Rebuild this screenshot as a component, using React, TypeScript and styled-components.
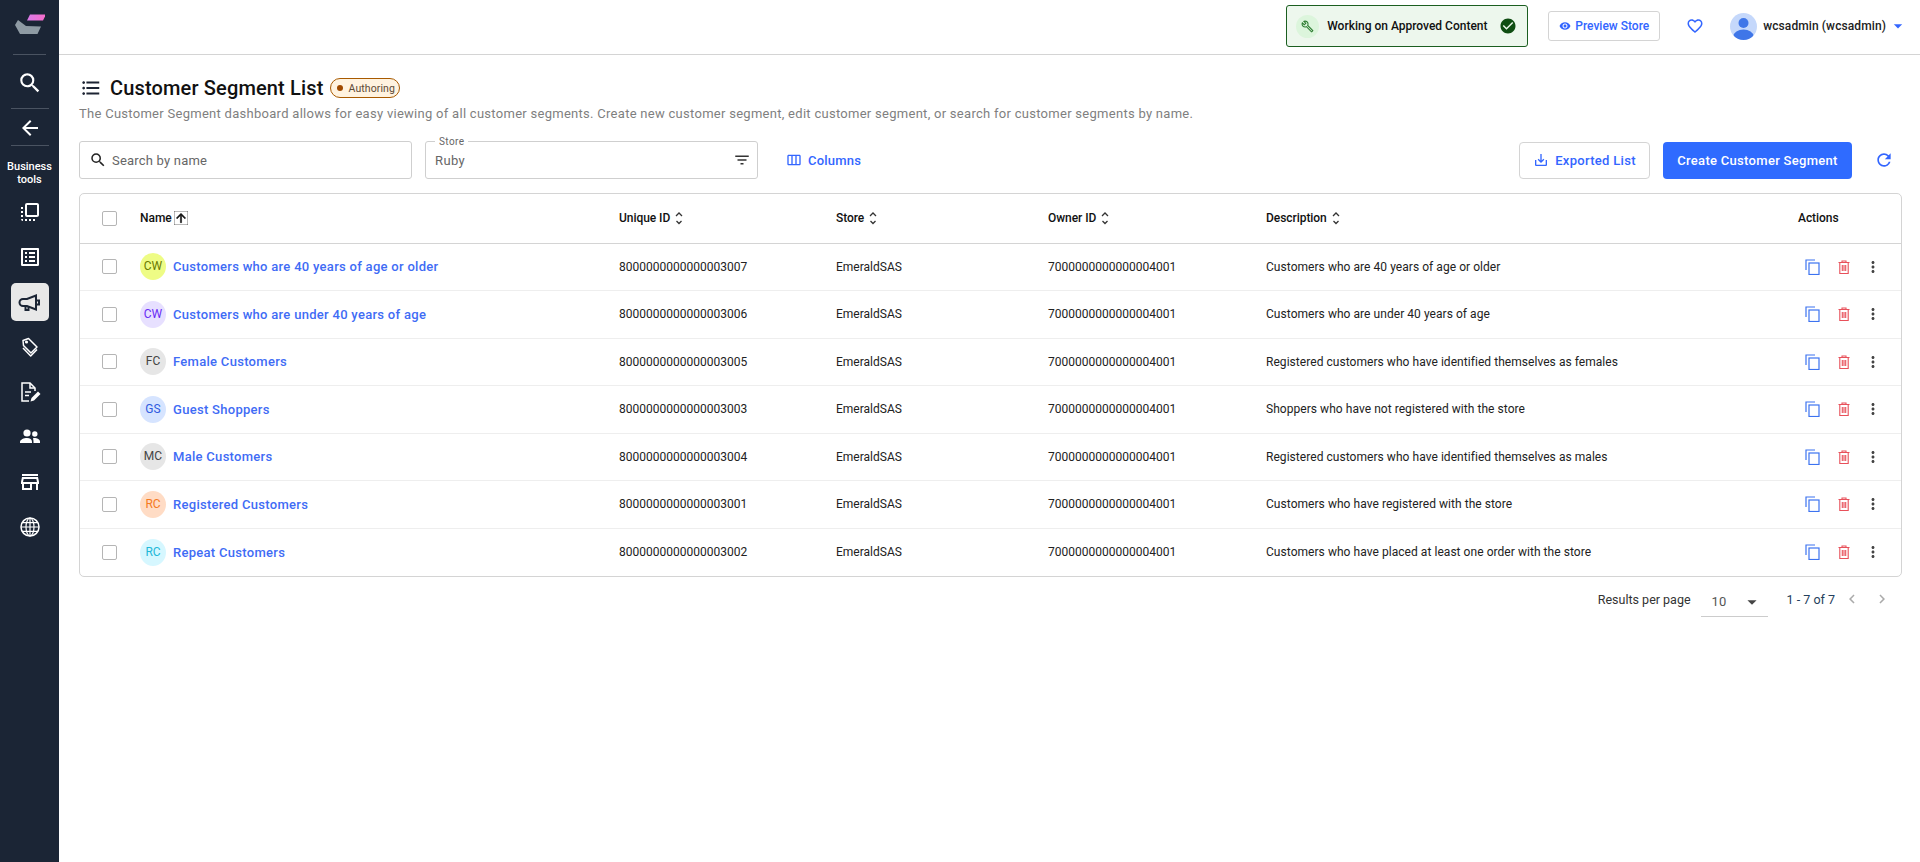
import styled, { createGlobalStyle } from "styled-components";
import {
  MdArrowBack, MdArrowDropDown, MdArrowUpward, MdCheckCircle, MdChevronLeft, MdChevronRight,
  MdFavoriteBorder, MdFilterList, MdFlipToFront, MdFormatListBulleted, MdMoreVert,
  MdOutlineBuild, MdOutlineListAlt, MdOutlineStore,
  MdOutlineViewWeek, MdRefresh, MdRemoveRedEye, MdSaveAlt, MdSearch,
} from "react-icons/md";

const GlobalStyle = createGlobalStyle`
  html, body { margin: 0; padding: 0; background: #fff; }
  body { font-family: Roboto, "Liberation Sans", sans-serif; color: #111; }
  * { box-sizing: border-box; }
`;

const Shell = styled.div`
  display: flex;
  min-height: 862px;
`;

const Sidebar = styled.aside`
  width: 59px;
  flex: none;
  background: #1b2535;
  display: flex;
  flex-direction: column;
  align-items: center;
  color: #fff;
`;

const LogoBox = styled.div`
  height: 55px;
  width: 33px;
  display: flex;
  align-items: flex-start;
  justify-content: center;
  border-bottom: 1px solid #4a5361;
  padding-top: 13px;
`;

const SideSlot = styled.div`
  height: 54px;
  width: 38px;
  display: flex;
  align-items: center;
  justify-content: center;
  font-size: 26px;
  padding-top: 2px;
  border-bottom: 1px solid #4a5361;
`;

const BackSlot = styled(SideSlot)`
  height: 37px;
  font-size: 24px;
`;

const SideLabel = styled.div`
  font-size: 11px;
  font-weight: 500;
  line-height: 13px;
  text-align: center;
  margin: 14px 0 7px;
  width: 50px;
`;

const SideNav = styled.nav`
  display: flex;
  flex-direction: column;
  gap: 7px;
`;

const SideItem = styled.div<{ $active?: boolean }>`
  width: 38px;
  height: 38px;
  border-radius: 5px;
  display: flex;
  align-items: center;
  justify-content: center;
  font-size: 24px;
  background: ${(p) => (p.$active ? "#e8e8e8" : "transparent")};
  color: ${(p) => (p.$active ? "#1b2535" : "#fff")};
`;

const Main = styled.main`
  flex: 1;
  min-width: 0;
  display: flex;
  flex-direction: column;
`;

const TopBar = styled.header`
  height: 55px;
  border-bottom: 1px solid #d4d4d4;
  display: flex;
  align-items: center;
  justify-content: flex-end;
  padding: 0 12px 2px 0;
`;

const WorkingBox = styled.div`
  width: 242px;
  height: 42px;
  border: 1px solid #1b5e20;
  border-radius: 3px;
  background: #edf7ed;
  display: flex;
  align-items: center;
  padding: 0 10px 0 9px;
  font-size: 12px;
  font-weight: 500;
  color: #111;
`;

const WrenchCircle = styled.span`
  width: 23px;
  height: 23px;
  border-radius: 50%;
  background: #dcf5dc;
  color: #2e7d32;
  display: flex;
  align-items: center;
  justify-content: center;
  font-size: 13px;
  margin-right: 8px;
`;

const WorkingText = styled.span`
  flex: 1;
`;

const CheckIcon = styled(MdCheckCircle)`
  color: #0f4d12;
  font-size: 18px;
`;

const PreviewButton = styled.div`
  width: 112px;
  height: 30px;
  margin-left: 20px;
  border: 1px solid #d4d4d4;
  border-radius: 3px;
  color: #3366ff;
  font-size: 12px;
  font-weight: 500;
  display: flex;
  align-items: center;
  justify-content: center;
  gap: 4px;
`;

const HeartIcon = styled(MdFavoriteBorder)`
  color: #3366ff;
  font-size: 18px;
  margin: 0 26px 0 26px;
`;

const Avatar = styled.span`
  width: 27px;
  height: 27px;
  border-radius: 50%;
  overflow: hidden;
  background: #c5d8fb;
  display: block;
  margin-right: 6px;
`;

const UserName = styled.span`
  font-size: 12px;
  font-weight: 500;
  letter-spacing: 0.1px;
  color: #222;
`;

const UserCaret = styled(MdArrowDropDown)`
  color: #3366ff;
  font-size: 20px;
  margin-left: 2px;
`;

const Content = styled.div`
  padding: 20px 18px 0 20px;
`;

const TitleRow = styled.div`
  display: flex;
  align-items: center;
  height: 26px;
  padding-left: 1px;
`;

const TitleIcon = styled(MdFormatListBulleted)`
  font-size: 22px;
  color: #1d2433;
  margin-right: 8px;
`;

const Title = styled.h1`
  font-size: 20px;
  font-weight: 500;
  margin: 0 6px 0 0;
  letter-spacing: 0.15px;
  color: #111;
`;

const Badge = styled.span`
  height: 20px;
  width: 70px;
  border: 1px solid #a85a00;
  border-radius: 10px;
  background: #fff3e0;
  display: flex;
  align-items: center;
  font-size: 10.5px;
  color: #5d4a36;
  letter-spacing: 0.1px;
  padding-left: 6px;
  gap: 6px;
`;

const BadgeDot = styled.i`
  width: 6px;
  height: 6px;
  border-radius: 50%;
  background: #a04a00;
`;

const Description = styled.p`
  margin: 4px 0 0;
  font-size: 13px;
  line-height: 18px;
  color: #7f7f7f;
  letter-spacing: 0.28px;
`;

const Toolbar = styled.div`
  display: flex;
  align-items: center;
  margin-top: 18px;
  height: 38px;
`;

const Field = styled.div`
  position: relative;
  width: 333px;
  height: 38px;
  border: 1px solid #cfcfcf;
  border-radius: 3px;
  display: flex;
  align-items: center;
  font-size: 13px;
  letter-spacing: 0.4px;
  color: #666;
`;

const SearchField = styled(Field)`
  padding-left: 9px;
  gap: 5px;
  letter-spacing: 0.2px;
`;

const StoreField = styled(Field)`
  margin-left: 13px;
  padding: 0 6px 0 9px;
  justify-content: space-between;
`;

const FieldLabel = styled.span`
  position: absolute;
  top: -6px;
  left: 9px;
  padding: 0 4px;
  background: #fff;
  font-size: 10px;
  line-height: 12px;
  color: #666;
`;

const ColumnsButton = styled.div`
  margin-left: 28px;
  display: flex;
  align-items: center;
  gap: 6px;
  color: #3366ff;
  font-size: 13px;
  font-weight: 500;
  letter-spacing: 0.2px;
`;

const ToolbarRight = styled.div`
  margin-left: auto;
  display: flex;
  align-items: center;
`;

const ExportButton = styled.div`
  width: 131px;
  height: 37px;
  border: 1px solid #d4d4d4;
  border-radius: 4px;
  display: flex;
  align-items: center;
  justify-content: center;
  gap: 6px;
  color: #3366ff;
  font-size: 13px;
  font-weight: 500;
  letter-spacing: 0.3px;
`;

const CreateButton = styled.div`
  width: 189px;
  height: 37px;
  margin-left: 13px;
  border-radius: 4px;
  background: #2f6bff;
  color: #fff;
  display: flex;
  align-items: center;
  justify-content: center;
  font-size: 13px;
  font-weight: 500;
  letter-spacing: 0.3px;
`;

const RefreshIcon = styled(MdRefresh)`
  color: #3366ff;
  font-size: 20px;
  margin: 0 8px 0 22px;
`;

const Table = styled.div`
  margin-top: 14px;
  border: 1px solid #d4d4d4;
  border-radius: 5px;
`;

const COLUMNS = "60px 479px 217px 212px 218px 532px 1fr";

const HeadRow = styled.div`
  display: grid;
  grid-template-columns: ${COLUMNS};
  align-items: center;
  height: 49.5px;
  border-bottom: 1px solid #d4d4d4;
  font-size: 12px;
  font-weight: 500;
  color: #111;
`;

const Row = styled.div`
  display: grid;
  grid-template-columns: ${COLUMNS};
  align-items: center;
  height: 47.5px;
  border-bottom: 1px solid #eee;
  font-size: 12px;
  color: #222;
  &:last-child { border-bottom: none; }
`;

const CheckCell = styled.div`
  padding-left: 22px;
  display: flex;
`;

const Checkbox = styled.span`
  width: 15px;
  height: 15px;
  border: 1px solid #b5b5b5;
  border-radius: 2px;
  display: block;
`;

const HeadCell = styled.div`
  display: flex;
  align-items: center;
  gap: 2px;
  font-size: 12px;
  letter-spacing: -0.05px;
`;

const SortGlyph = styled.svg`
  width: 8px;
  height: 16px;
  margin-left: 3px;
  color: #333;
`;

const NameCell = styled.div`
  display: flex;
  align-items: center;
  gap: 7px;
`;

const Initials = styled.span<{ $bg: string; $fg: string }>`
  width: 26px;
  height: 27px;
  border-radius: 50%;
  background: ${(p) => p.$bg};
  color: ${(p) => p.$fg};
  font-size: 12px;
  font-weight: 400;
  padding-bottom: 1px;
  display: flex;
  align-items: center;
  justify-content: center;
`;

const NameLink = styled.a`
  color: #3f6cf5;
  font-size: 13px;
  font-weight: 500;
  letter-spacing: 0.29px;
`;

const DescriptionCell = styled.div`
  letter-spacing: 0.05px;
`;

const Actions = styled.div`
  display: flex;
  align-items: center;
  padding-left: 7px;
`;

const CopyGlyph = styled.svg`
  width: 16px;
  height: 16px;
  color: #3d73f0;
`;

const TrashGlyph = styled.svg`
  width: 16px;
  height: 16px;
  margin-left: 15px;
  color: #e8505a;
`;

const MoreIcon = styled(MdMoreVert)`
  font-size: 18px;
  color: #444;
  margin-left: 12px;
`;

const Pager = styled.div`
  display: flex;
  align-items: center;
  justify-content: flex-end;
  height: 44px;
  font-size: 12.5px;
  color: #333;
  padding-right: 7px;
`;

const PageSelect = styled.div`
  width: 67px;
  height: 30px;
  margin: 6px 19px 0 10px;
  padding: 0 5px 0 11px;
  border-bottom: 1px solid #ccc;
  display: flex;
  align-items: center;
  justify-content: space-between;
  font-size: 13px;
  color: #555;
`;

const PageCount = styled.span`
  font-size: 12.5px;
  color: #24405c;
`;

const PageArrow = styled.span`
  display: flex;
  color: #aaa;
  font-size: 18px;
  margin-left: 3px;
  width: 27px;
  justify-content: center;
`;

const SEGMENTS = [
  { initials: "CW", bg: "#eefc85", fg: "#6b7a00", name: "Customers who are 40 years of age or older", id: "8000000000000003007", desc: "Customers who are 40 years of age or older" },
  { initials: "CW", bg: "#e7e0ff", fg: "#6a2cf5", name: "Customers who are under 40 years of age", id: "8000000000000003006", desc: "Customers who are under 40 years of age" },
  { initials: "FC", bg: "#e6e6e6", fg: "#444", name: "Female Customers", id: "8000000000000003005", desc: "Registered customers who have identified themselves as females" },
  { initials: "GS", bg: "#d6e4ff", fg: "#2f5be0", name: "Guest Shoppers", id: "8000000000000003003", desc: "Shoppers who have not registered with the store" },
  { initials: "MC", bg: "#e6e6e6", fg: "#444", name: "Male Customers", id: "8000000000000003004", desc: "Registered customers who have identified themselves as males" },
  { initials: "RC", bg: "#ffdcc5", fg: "#f57a22", name: "Registered Customers", id: "8000000000000003001", desc: "Customers who have registered with the store" },
  { initials: "RC", bg: "#d6f7ff", fg: "#1fb8d8", name: "Repeat Customers", id: "8000000000000003002", desc: "Customers who have placed at least one order with the store" },
];

const Logo = () => (
  <svg width="30" height="22" viewBox="0 0 30 22">
    <defs>
      <linearGradient id="logoPink" x1="0" x2="1" y1="0" y2="0">
        <stop offset="0" stopColor="#d97be8" />
        <stop offset="1" stopColor="#f76cc8" />
      </linearGradient>
    </defs>
    <polygon points="12,7.5 15,1.5 31,1.5 28,7.5" fill="url(#logoPink)" />
    <polygon points="0,12 3,7 11,13 26,13.5 22.500,21 5,21" fill="#8e9aa3" />
  </svg>
);

const UserAvatar = () => (
  <Avatar>
    <svg width="27" height="27" viewBox="0 0 27 27">
      <circle cx="13.5" cy="10" r="5" fill="#3f76e8" />
      <ellipse cx="13.5" cy="23" rx="10" ry="6.500" fill="#3f76e8" />
    </svg>
  </Avatar>
);

const Copy = () => (
  <CopyGlyph viewBox="0 0 16 16" fill="none" stroke="currentColor" strokeWidth="1.200">
    <path d="M1 11V1h9" />
    <rect x="4" y="4" width="10" height="11.500" />
  </CopyGlyph>
);

const Trash = () => (
  <TrashGlyph viewBox="0 0 16 16" fill="none" stroke="currentColor" strokeWidth="1.100">
    <path d="M2.500 3.500h11M6 3.500V2h4v1.500" />
    <path d="M3.800 3.500v11h8.400v-11" />
    <path d="M6.300 6v6M8 6v6M9.700 6v6" />
  </TrashGlyph>
);

const SortArrows = () => (
  <SortGlyph viewBox="0 0 8 16" fill="none" stroke="currentColor" strokeWidth="1.300">
    <path d="M1 6l3-3 3 3" />
    <path d="M1.500 11l2.500 2.500L6.500 11" />
  </SortGlyph>
);

const Megaphone = () => (
  <svg width="24" height="24" viewBox="0 0 24 24" fill="none" stroke="currentColor" strokeWidth="2">
    <path d="M5 9h4l9-3.500v14L9 16H5a3.500 3.500 0 0 1 0-7z" />
    <path d="M7.500 16.500V20h3v-3M18 10.500h3v4h-3" />
  </svg>
);

const Tags = () => (
  <svg width="24" height="24" viewBox="0 0 24 24" fill="none" stroke="currentColor" strokeWidth="1.500" strokeLinejoin="round">
    <path d="M5 5.500l5.500-2 8.500 8.500-6 6-7.500-7.500z" />
    <path d="M5 13l7.700 8 6.300-6.500" />
    <circle cx="8.500" cy="7" r="0.800" fill="currentColor" />
  </svg>
);

const DocumentEdit = () => (
  <svg width="24" height="24" viewBox="0 0 24 24" fill="none" stroke="currentColor" strokeWidth="1.500">
    <path d="M11 21H4V3h8l5 5v3" />
    <path d="M12 3v5h5M7 12h6M7 15.500h4" />
    <path d="M12.500 21.500l1-3.500 6.500-6.500 2.500 2.500-6.500 6.500z" fill="currentColor" stroke="none" />
  </svg>
);

const PeopleGlyph = () => (
  <svg width="24" height="24" viewBox="0 0 24 24" fill="currentColor">
    <circle cx="9" cy="8" r="3.600" />
    <circle cx="16.800" cy="9" r="2.700" />
    <path d="M2 18v-1c0-2.500 4-4 7-4s5 1.500 5 4v1z" />
    <path d="M15 13.200c3-.5 7 .8 7 3.300V18h-6.500v-1c0-1.500-.2-2.800-.5-3.800z" />
  </svg>
);

const Globe = () => (
  <svg width="24" height="24" viewBox="0 0 24 24" fill="none" stroke="currentColor" strokeWidth="1.200">
    <circle cx="12" cy="12" r="9" strokeWidth="1.500" />
    <ellipse cx="12" cy="12" rx="4" ry="9" />
    <path d="M12 3v18M3 12h18M4.200 7.700h15.600M4.200 16.300h15.600" />
  </svg>
);

const App = () => {
  return (
    <>
      <GlobalStyle />
      <Shell>
        <Sidebar>
          <LogoBox><Logo /></LogoBox>
          <SideSlot><MdSearch /></SideSlot>
          <BackSlot><MdArrowBack /></BackSlot>
          <SideLabel>Business tools</SideLabel>
          <SideNav>
            <SideItem><MdFlipToFront /></SideItem>
            <SideItem><MdOutlineListAlt /></SideItem>
            <SideItem $active><Megaphone /></SideItem>
            <SideItem><Tags /></SideItem>
            <SideItem><DocumentEdit /></SideItem>
            <SideItem><PeopleGlyph /></SideItem>
            <SideItem><MdOutlineStore /></SideItem>
            <SideItem><Globe /></SideItem>
          </SideNav>
        </Sidebar>
        <Main>
          <TopBar>
            <WorkingBox>
              <WrenchCircle><MdOutlineBuild /></WrenchCircle>
              <WorkingText>Working on Approved Content</WorkingText>
              <CheckIcon />
            </WorkingBox>
            <PreviewButton><MdRemoveRedEye />Preview Store</PreviewButton>
            <HeartIcon />
            <UserAvatar />
            <UserName>wcsadmin (wcsadmin)</UserName>
            <UserCaret />
          </TopBar>
          <Content>
            <TitleRow>
              <TitleIcon />
              <Title>Customer Segment List</Title>
              <Badge><BadgeDot />Authoring</Badge>
            </TitleRow>
            <Description>
              The Customer Segment dashboard allows for easy viewing of all customer segments. Create new customer segment, edit customer segment, or search for customer segments by name.
            </Description>
            <Toolbar>
              <SearchField><MdSearch size={18} color="#222" />Search by name</SearchField>
              <StoreField>
                <FieldLabel>Store</FieldLabel>
                Ruby
                <MdFilterList size={18} color="#333" />
              </StoreField>
              <ColumnsButton><MdOutlineViewWeek size={16} />Columns</ColumnsButton>
              <ToolbarRight>
                <ExportButton><MdSaveAlt size={16} />Exported List</ExportButton>
                <CreateButton>Create Customer Segment</CreateButton>
                <RefreshIcon />
              </ToolbarRight>
            </Toolbar>
            <Table>
              <HeadRow>
                <CheckCell><Checkbox /></CheckCell>
                <HeadCell>Name <MdArrowUpward size={14} strokeWidth={1} /></HeadCell>
                <HeadCell>Unique ID <SortArrows /></HeadCell>
                <HeadCell>Store <SortArrows /></HeadCell>
                <HeadCell>Owner ID <SortArrows /></HeadCell>
                <HeadCell>Description <SortArrows /></HeadCell>
                <HeadCell>Actions</HeadCell>
              </HeadRow>
              {SEGMENTS.map((s) => (
                <Row key={s.id}>
                  <CheckCell><Checkbox /></CheckCell>
                  <NameCell>
                    <Initials $bg={s.bg} $fg={s.fg}>{s.initials}</Initials>
                    <NameLink>{s.name}</NameLink>
                  </NameCell>
                  <div>{s.id}</div>
                  <div>EmeraldSAS</div>
                  <div>7000000000000004001</div>
                  <DescriptionCell>{s.desc}</DescriptionCell>
                  <Actions>
                    <Copy />
                    <Trash />
                    <MoreIcon />
                  </Actions>
                </Row>
              ))}
            </Table>
            <Pager>
              Results per page
              <PageSelect>10 <MdArrowDropDown size={22} color="#444" /></PageSelect>
              <PageCount>1 - 7 of 7</PageCount>
              <PageArrow><MdChevronLeft /></PageArrow>
              <PageArrow><MdChevronRight /></PageArrow>
            </Pager>
          </Content>
        </Main>
      </Shell>
    </>
  );
};

export default App;
